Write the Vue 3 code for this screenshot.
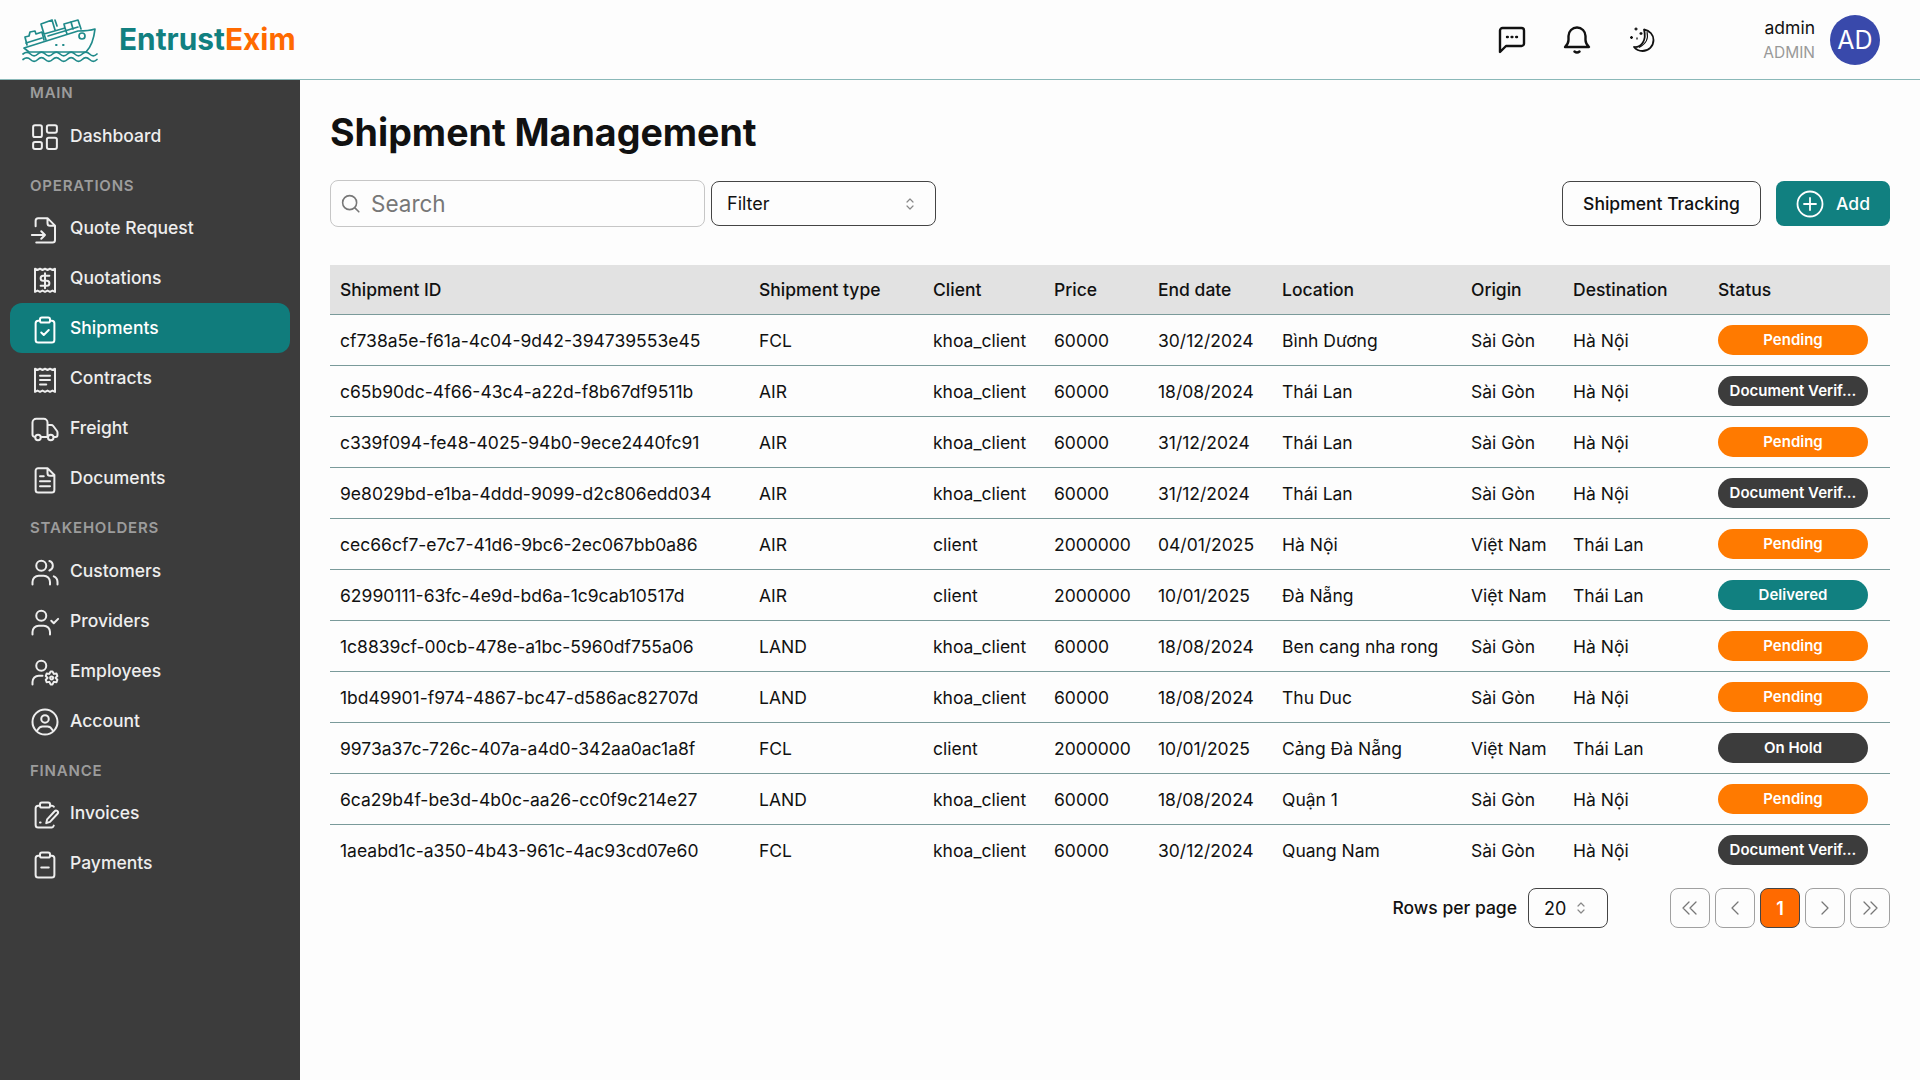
<template>
  <div class="app">
    <header class="topbar">
      <svg class="ship" width="90" height="55" viewBox="0 0 90 55" fill="none" stroke="#1f8a8a" stroke-width="1.7" stroke-linejoin="round" stroke-linecap="round">
        <path d="M9 36 63 19c6 0 11 0 17-2-1 9-3 17-9 23H14z"/>
        <path d="M11 31l16-5M33 24l30-9"/>
        <path d="M12 33l-2-8 4-1 1-4 5-1 1 3 6-2 2 8"/>
        <path d="M29 22l-3-10 11-4 3 10M31 28l-2-6 21-6 2 6M50 16l-1-4 14-4 3 9"/>
        <path d="M40 8l2 6M56 10l2 7"/>
        <circle cx="67" cy="24" r="3"/>
        <path d="M41 33h.6M48 33h.6" stroke-width="2"/>
        <path d="M8 42c3-2.400 5-2.400 7.400 0s5 2.400 7.400 0 5-2.400 7.400 0 5 2.400 7.400 0 5-2.400 7.400 0 5 2.400 7.400 0 5-2.400 7.400 0 5 2.400 7.400 0 5-2.400 7.400 0 5 2.400 7.400 0"/>
        <path d="M8 47.500c3-2.400 5-2.400 7.400 0s5 2.400 7.400 0 5-2.400 7.400 0 5 2.400 7.400 0 5-2.400 7.400 0 5 2.400 7.400 0 5-2.400 7.400 0 5 2.400 7.400 0 5-2.400 7.400 0 5 2.400 7.400 0"/>
      </svg>
      <div class="brand">Entrust<span>Exim</span></div>
      <div class="top-actions">
        <svg class="top-icon" viewBox="0 0 30 30" fill="none" stroke="#111" stroke-width="2.400" stroke-linejoin="round">
          <path d="M3 27V5.500A2.500 2.500 0 0 1 5.500 3h19A2.500 2.500 0 0 1 27 5.500v13a2.500 2.500 0 0 1-2.500 2.500H9z"/>
          <path d="M10 12h.8M14.600 12h.8M19.200 12h.8" stroke-linecap="round"/>
        </svg>
        <svg class="top-icon" viewBox="0 0 30 30" fill="none" stroke="#111" stroke-width="2.400" stroke-linecap="round" stroke-linejoin="round">
          <path d="M6.500 15V11a8.500 8.500 0 0 1 17 0v4c0 3 1.500 5 3.500 7H3c2-2 3.500-4 3.500-7z"/>
          <path d="M12.500 26.500c1.500 1.300 3.500 1.300 5 0"/>
        </svg>
        <svg class="top-icon" viewBox="0 0 30 30" fill="none" stroke="#111" stroke-width="1.800" stroke-linejoin="round">
          <path d="M17 4.500c6 1 9.500 5.500 9.500 10.500a11 11 0 0 1-11 11c-3.500 0-6.500-1.500-8.500-4 7 .5 13-6 10-17.500z"/>
          <path d="M20 7c1.500 6-1 12-8 15.500" stroke-width="1.100"/>
          <path d="M9 2.500v3M7.500 4h3M14 7v3M12.500 8.500h3M4.500 11v3M3 12.500h3M10 12.500v2" stroke-width="1.300"/>
        </svg>
      </div>
      <div class="user">
        <div class="user-name">admin</div>
        <div class="user-role">ADMIN</div>
      </div>
      <div class="avatar">AD</div>
    </header>

    <div class="body">
      <aside class="sidebar">
        <template v-for="group in menu" :key="group.label">
          <div class="menu-label">{{ group.label }}</div>
          <a
            v-for="item in group.items"
            :key="item.name"
            class="menu-item"
            :class="{ active: item.name === 'Shipments' }"
          >
            <svg class="menu-icon" viewBox="0 0 24 24" fill="none" stroke="currentColor" stroke-width="1.600" stroke-linecap="round" stroke-linejoin="round">
              <path :d="item.icon"/>
            </svg>
            <span>{{ item.name }}</span>
          </a>
        </template>
      </aside>

      <main class="content">
        <h1 class="title">Shipment Management</h1>

        <div class="toolbar">
          <div class="search">
            <svg width="21" height="21" viewBox="0 0 24 24" fill="none" stroke="#777" stroke-width="1.800" stroke-linecap="round">
              <circle cx="11" cy="11" r="8"/>
              <path d="M17 17l4.500 4.500"/>
            </svg>
            <span>Search</span>
          </div>
          <div class="select filter">
            <span>Filter</span>
            <svg width="12" height="18" viewBox="0 0 12 18" fill="none" stroke="#888" stroke-width="1.200" stroke-linecap="round" stroke-linejoin="round">
              <path d="M3 7l3-3 3 3M3 11l3 3 3-3"/>
            </svg>
          </div>
          <button class="btn btn-outline">Shipment Tracking</button>
          <button class="btn btn-primary">
            <svg width="28" height="28" viewBox="0 0 28 28" fill="none" stroke="#fff" stroke-width="1.800" stroke-linecap="round">
              <circle cx="14" cy="14" r="12.500"/>
              <path d="M14 8v12M8 14h12"/>
            </svg>
            Add
          </button>
        </div>

        <table class="table">
          <colgroup>
            <col v-for="w in colWidths" :key="w.key" :style="{ width: w.width + 'px' }">
          </colgroup>
          <thead>
            <tr>
              <th v-for="h in headers" :key="h">{{ h }}</th>
            </tr>
          </thead>
          <tbody>
            <tr v-for="row in shipments" :key="row.id">
              <td>{{ row.id }}</td>
              <td>{{ row.type }}</td>
              <td>{{ row.client }}</td>
              <td>{{ row.price }}</td>
              <td>{{ row.end }}</td>
              <td>{{ row.location }}</td>
              <td>{{ row.origin }}</td>
              <td>{{ row.dest }}</td>
              <td><div class="pill" :class="statusClass[row.status]">{{ shortStatus(row.status) }}</div></td>
            </tr>
          </tbody>
        </table>

        <div class="pager">
          <span class="rows-label">Rows per page</span>
          <div class="select rows">
            <span>20</span>
            <svg width="12" height="18" viewBox="0 0 12 18" fill="none" stroke="#888" stroke-width="1.200" stroke-linecap="round" stroke-linejoin="round">
              <path d="M3 7l3-3 3 3M3 11l3 3 3-3"/>
            </svg>
          </div>
          <div class="pages">
            <button class="page"><svg width="20" height="20" viewBox="0 0 20 20" fill="none" stroke="#777" stroke-width="1.300" stroke-linecap="round" stroke-linejoin="round"><path d="M9 4l-6 6 6 6M16 4l-6 6 6 6"/></svg></button>
            <button class="page"><svg width="20" height="20" viewBox="0 0 20 20" fill="none" stroke="#777" stroke-width="1.300" stroke-linecap="round" stroke-linejoin="round"><path d="M13 4l-6 6 6 6"/></svg></button>
            <button class="page current">1</button>
            <button class="page"><svg width="20" height="20" viewBox="0 0 20 20" fill="none" stroke="#777" stroke-width="1.300" stroke-linecap="round" stroke-linejoin="round"><path d="M7 4l6 6-6 6"/></svg></button>
            <button class="page"><svg width="20" height="20" viewBox="0 0 20 20" fill="none" stroke="#777" stroke-width="1.300" stroke-linecap="round" stroke-linejoin="round"><path d="M4 4l6 6-6 6M11 4l6 6-6 6"/></svg></button>
          </div>
        </div>
      </main>
    </div>
  </div>
</template>

<script setup>
const receipt = 'M4 3l2 1 2-1 2 1 2-1 2 1 2-1 2 1 2-1v18.500l-2-1-2 1-2-1-2 1-2-1-2 1-2-1-2 1z'
const clip = 'M8 4.500H6.500a2 2 0 0 0-2 2V20a2 2 0 0 0 2 2h11a2 2 0 0 0 2-2V6.500a2 2 0 0 0-2-2H16M9.500 2h5A1.500 1.500 0 0 1 16 3.500v1A1.500 1.500 0 0 1 14.500 6h-5A1.500 1.500 0 0 1 8 4.500v-1A1.500 1.500 0 0 1 9.500 2z'

const menu = [
  {
    label: 'MAIN',
    items: [
      { name: 'Dashboard', icon: 'M4 2.500h4a1.500 1.500 0 0 1 1.500 1.500v6.500A1.500 1.500 0 0 1 8 12H4a1.500 1.500 0 0 1-1.500-1.500V4A1.500 1.500 0 0 1 4 2.500zM4 16h4a1.500 1.500 0 0 1 1.500 1.500v2.500A1.500 1.500 0 0 1 8 21.500H4A1.500 1.500 0 0 1 2.500 20v-2.500A1.500 1.500 0 0 1 4 16zM15 12.500h5a1.500 1.500 0 0 1 1.500 1.500v6a1.500 1.500 0 0 1-1.500 1.500h-5a1.500 1.500 0 0 1-1.500-1.500v-6a1.500 1.500 0 0 1 1.500-1.500zM15 2.500h5A1.500 1.500 0 0 1 21.500 4v3A1.500 1.500 0 0 1 20 8.500h-5A1.500 1.500 0 0 1 13.500 7V4A1.500 1.500 0 0 1 15 2.500z' }
    ]
  },
  {
    label: 'OPERATIONS',
    items: [
      { name: 'Quote Request', icon: 'M4.500 9V4.500a2 2 0 0 1 2-2H14l6 6V20a2 2 0 0 1-2 2H5M14 2.500v4a2 2 0 0 0 2 2h4M1.500 16H12M9 13l3 3-3 3' },
      { name: 'Quotations', icon: receipt + 'M15.500 8.500H10.500a2 2 0 0 0 0 4h3a2 2 0 0 1 0 4H8.500M12 6.500v12' },
      { name: 'Shipments', icon: clip + 'M9 14l2 2 4-4' },
      { name: 'Contracts', icon: receipt + 'M8 8.500h8M8 12h8M8 15.500h5' },
      { name: 'Freight', icon: 'M3.500 17.500A2 2 0 0 1 2 15.500V6a3 3 0 0 1 3-3h6a3 3 0 0 1 3 3v11.500H9M14 8h3a2 2 0 0 1 1.600.8l3 4a2 2 0 0 1 .4 1.200v2a1.500 1.500 0 0 1-1.500 1.500H19.500M14 17.500h.5M8.600 18a2.200 2.200 0 1 1-4.400 0 2.200 2.200 0 0 1 4.400 0zM18.800 18a2.200 2.200 0 1 1-4.400 0 2.200 2.200 0 0 1 4.400 0z' },
      { name: 'Documents', icon: 'M14 2.500H6.500a2 2 0 0 0-2 2V20a2 2 0 0 0 2 2h11a2 2 0 0 0 2-2V8zM14 2.500v4a2 2 0 0 0 2 2h3.500M8 9h3M8 13h8M8 17h8' }
    ]
  },
  {
    label: 'STAKEHOLDERS',
    items: [
      { name: 'Customers', icon: 'M13 7a4 4 0 1 1-8 0 4 4 0 0 1 8 0zM15.500 3.200a4 4 0 0 1 0 7.600M2 22v-2a5 5 0 0 1 5-5h4a5 5 0 0 1 5 5v2M19 15.500a5 5 0 0 1 3 4.500v2' },
      { name: 'Providers', icon: 'M13 7a4 4 0 1 1-8 0 4 4 0 0 1 8 0zM2 22v-2a5 5 0 0 1 5-5h4a5 5 0 0 1 5 5v2M17 11l2 2 3.500-3.500' },
      { name: 'Employees', icon: 'M13 7a4 4 0 1 1-8 0 4 4 0 0 1 8 0zM2 22v-2a5 5 0 0 1 5-5h3M18 11.500l1 2 2.200-.3.700 2-1.500 1.500 1.500 1.500-.7 2-2.200-.3-1 2h-1.500l-1-2-2.200.3-.7-2 1.500-1.500-1.500-1.500.7-2 2.200.3 1-2zM18.500 16.700a1.200 1.200 0 1 1-2.400 0 1.200 1.200 0 0 1 2.400 0z' },
      { name: 'Account', icon: 'M22 12a10 10 0 1 1-20 0 10 10 0 0 1 20 0zM15 9.500a3 3 0 1 1-6 0 3 3 0 0 1 6 0zM6 18.500c1-2 2.500-3 4-3h4c1.500 0 3 1 4 3' }
    ]
  },
  {
    label: 'FINANCE',
    items: [
      { name: 'Invoices', icon: 'M8 4.500H6.500a2 2 0 0 0-2 2V20a2 2 0 0 0 2 2h11a2 2 0 0 0 1.500-1.500M16 4.500h1.500a2 2 0 0 1 1.500.8M9.500 2h5A1.500 1.500 0 0 1 16 3.500v1A1.500 1.500 0 0 1 14.500 6h-5A1.500 1.500 0 0 1 8 4.500v-1A1.500 1.500 0 0 1 9.500 2zM8 18h.5M13 18.500l.7-3 6-6.500a1.500 1.500 0 0 1 2.300 2l-6 6.500z' },
      { name: 'Payments', icon: clip + 'M9 14h6' }
    ]
  }
]

const headers = ['Shipment ID', 'Shipment type', 'Client', 'Price', 'End date', 'Location', 'Origin', 'Destination', 'Status']

const colWidths = [419, 174, 121, 104, 124, 189, 102, 145, 182].map((width, key) => ({ key, width }))

const statusClass = {
  Pending: 'pending',
  'Document Verification': 'dark',
  'On Hold': 'dark',
  Delivered: 'delivered'
}

// long statuses don't fit the 150px pill
function shortStatus(status) {
  return status.length > 14 ? status.slice(0, 14) + '...' : status
}

const shipments = [
  { id: 'cf738a5e-f61a-4c04-9d42-394739553e45', type: 'FCL', client: 'khoa_client', price: 60000, end: '30/12/2024', location: 'Bình Dương', origin: 'Sài Gòn', dest: 'Hà Nội', status: 'Pending' },
  { id: 'c65b90dc-4f66-43c4-a22d-f8b67df9511b', type: 'AIR', client: 'khoa_client', price: 60000, end: '18/08/2024', location: 'Thái Lan', origin: 'Sài Gòn', dest: 'Hà Nội', status: 'Document Verification' },
  { id: 'c339f094-fe48-4025-94b0-9ece2440fc91', type: 'AIR', client: 'khoa_client', price: 60000, end: '31/12/2024', location: 'Thái Lan', origin: 'Sài Gòn', dest: 'Hà Nội', status: 'Pending' },
  { id: '9e8029bd-e1ba-4ddd-9099-d2c806edd034', type: 'AIR', client: 'khoa_client', price: 60000, end: '31/12/2024', location: 'Thái Lan', origin: 'Sài Gòn', dest: 'Hà Nội', status: 'Document Verification' },
  { id: 'cec66cf7-e7c7-41d6-9bc6-2ec067bb0a86', type: 'AIR', client: 'client', price: 2000000, end: '04/01/2025', location: 'Hà Nội', origin: 'Việt Nam', dest: 'Thái Lan', status: 'Pending' },
  { id: '62990111-63fc-4e9d-bd6a-1c9cab10517d', type: 'AIR', client: 'client', price: 2000000, end: '10/01/2025', location: 'Đà Nẵng', origin: 'Việt Nam', dest: 'Thái Lan', status: 'Delivered' },
  { id: '1c8839cf-00cb-478e-a1bc-5960df755a06', type: 'LAND', client: 'khoa_client', price: 60000, end: '18/08/2024', location: 'Ben cang nha rong', origin: 'Sài Gòn', dest: 'Hà Nội', status: 'Pending' },
  { id: '1bd49901-f974-4867-bc47-d586ac82707d', type: 'LAND', client: 'khoa_client', price: 60000, end: '18/08/2024', location: 'Thu Duc', origin: 'Sài Gòn', dest: 'Hà Nội', status: 'Pending' },
  { id: '9973a37c-726c-407a-a4d0-342aa0ac1a8f', type: 'FCL', client: 'client', price: 2000000, end: '10/01/2025', location: 'Cảng Đà Nẵng', origin: 'Việt Nam', dest: 'Thái Lan', status: 'On Hold' },
  { id: '6ca29b4f-be3d-4b0c-aa26-cc0f9c214e27', type: 'LAND', client: 'khoa_client', price: 60000, end: '18/08/2024', location: 'Quận 1', origin: 'Sài Gòn', dest: 'Hà Nội', status: 'Pending' },
  { id: '1aeabd1c-a350-4b43-961c-4ac93cd07e60', type: 'FCL', client: 'khoa_client', price: 60000, end: '30/12/2024', location: 'Quang Nam', origin: 'Sài Gòn', dest: 'Hà Nội', status: 'Document Verification' }
]
</script>

<style scoped>
.app {
  display: flex;
  flex-direction: column;
  height: 100vh;
  background: #fdfdfd;
  color: #111;
  font-family: Inter, "Noto Sans", sans-serif;
  overflow: hidden;
}

.topbar {
  display: flex;
  align-items: center;
  height: 80px;
  flex: none;
  box-sizing: border-box;
  padding: 0 40px 0 15px;
  border-bottom: 1px solid #8ab8b8;
}

.ship {
  flex: none;
}

.brand {
  margin-left: 14px;
  font-size: 29.800px;
  font-weight: 700;
  color: #118080;
  transform: translateY(-1px);
}

.brand span {
  color: #ff6a00;
}

.top-actions {
  display: flex;
  gap: 35px;
  margin-left: auto;
  margin-right: 106px;
}

.top-icon {
  width: 30px;
  height: 30px;
}

.user {
  text-align: right;
  margin-right: 15px;
  padding-top: 2px;
}

.user-name {
  font-size: 17.500px;
  line-height: 24px;
  padding-bottom: 1px;
}

.user-role {
  font-size: 15.500px;
  line-height: 24px;
  color: #999;
}

.avatar {
  display: flex;
  align-items: center;
  justify-content: center;
  width: 50px;
  height: 50px;
  border-radius: 50%;
  background: #3949ab;
  color: #fff;
  font-size: 25px;
}

.body {
  display: flex;
  flex: 1;
  min-height: 0;
}

.sidebar {
  width: 300px;
  flex: none;
  box-sizing: border-box;
  padding: 0 10px;
  background: #3c3c3c;
}

.menu-label {
  padding-left: 20px;
  margin: 15.500px 0 7px;
  font-size: 15px;
  font-weight: 600;
  line-height: 20px;
  letter-spacing: 0.8px;
  color: #9c9c9c;
}

.menu-label:first-child {
  margin-top: 3px;
  margin-bottom: 7px;
}

.menu-item {
  display: flex;
  align-items: center;
  gap: 10px;
  height: 50px;
  padding-left: 20px;
  border-radius: 12px;
  font-size: 17.500px;
  font-weight: 500;
  color: #eee;
}

.menu-item.active {
  background: #107c7c;
  color: #fff;
}

.menu-icon {
  width: 30px;
  height: 30px;
  margin-top: 4px;
  flex: none;
}

.content {
  flex: 1;
  min-width: 0;
  padding: 0 30px;
}

.title {
  margin: 0;
  padding-top: 30px;
  font-size: 37.600px;
  font-weight: 700;
  line-height: 46px;
  color: #111;
}

.toolbar {
  display: flex;
  align-items: center;
  margin-top: 24px;
  height: 47px;
}

.search {
  display: flex;
  align-items: center;
  gap: 10px;
  width: 375px;
  height: 47px;
  box-sizing: border-box;
  padding-left: 9px;
  border: 1px solid #c6c6c6;
  border-radius: 8px;
  font-size: 22.500px;
  color: #777;
}

.select {
  display: flex;
  align-items: center;
  justify-content: space-between;
  box-sizing: border-box;
  border: 1px solid #444;
  border-radius: 8px;
  font-size: 18px;
}

.filter {
  width: 225px;
  height: 45px;
  margin-left: 6px;
  padding: 0 19px 0 15px;
}

.btn {
  display: flex;
  align-items: center;
  justify-content: center;
  height: 45px;
  box-sizing: border-box;
  border-radius: 8px;
  font-family: inherit;
  font-size: 17.500px;
  font-weight: 500;
}

.btn-outline {
  width: 199px;
  margin-left: auto;
  border: 1px solid #444;
  background: transparent;
  color: #111;
}

.btn-primary {
  gap: 12px;
  width: 114px;
  margin-left: 15px;
  border: none;
  background: #118080;
  color: #fff;
}

.table {
  width: 1560px;
  margin-top: 38px;
  table-layout: fixed;
  border-collapse: collapse;
  font-size: 17.500px;
}

th {
  height: 49px;
  box-sizing: border-box;
  padding: 1px 10px 0;
  background: #e2e2e2;
  border-bottom: 1px solid #7a9a9a;
  text-align: left;
  font-weight: 500;
}

td {
  height: 51px;
  box-sizing: border-box;
  padding: 2px 10px 0;
  border-bottom: 1px solid #7a9a9a;
  white-space: nowrap;
}

tr:last-child td {
  border-bottom: none;
}

.pill {
  width: 150px;
  height: 30px;
  margin-top: -2px;
  border-radius: 15px;
  font-size: 15px;
  font-weight: 600;
  line-height: 30px;
  text-align: center;
  color: #fff;
}

.pill.pending {
  background: #ff7a00;
}

.pill.dark {
  background: #3c3c3c;
}

.pill.delivered {
  background: #118080;
}

.pager {
  display: flex;
  align-items: center;
  justify-content: flex-end;
  margin-top: 13px;
}

.rows-label {
  padding-bottom: 2px;
  font-size: 17.500px;
  font-weight: 500;
}

.rows {
  width: 80px;
  height: 40px;
  margin-left: 11px;
  padding: 0 20px 0 15px;
}

.pages {
  display: flex;
  gap: 5px;
  margin-left: 62px;
}

.page {
  display: flex;
  align-items: center;
  justify-content: center;
  width: 40px;
  height: 40px;
  padding: 0;
  border: 1px solid #a0a0a0;
  border-radius: 8px;
  background: transparent;
}

.page.current {
  border-color: #444;
  background: #ff6a00;
  color: #fff;
  font-family: inherit;
  font-size: 18px;
  font-weight: 600;
}
</style>

<style>
body {
  background: #fdfdfd;
}
</style>
